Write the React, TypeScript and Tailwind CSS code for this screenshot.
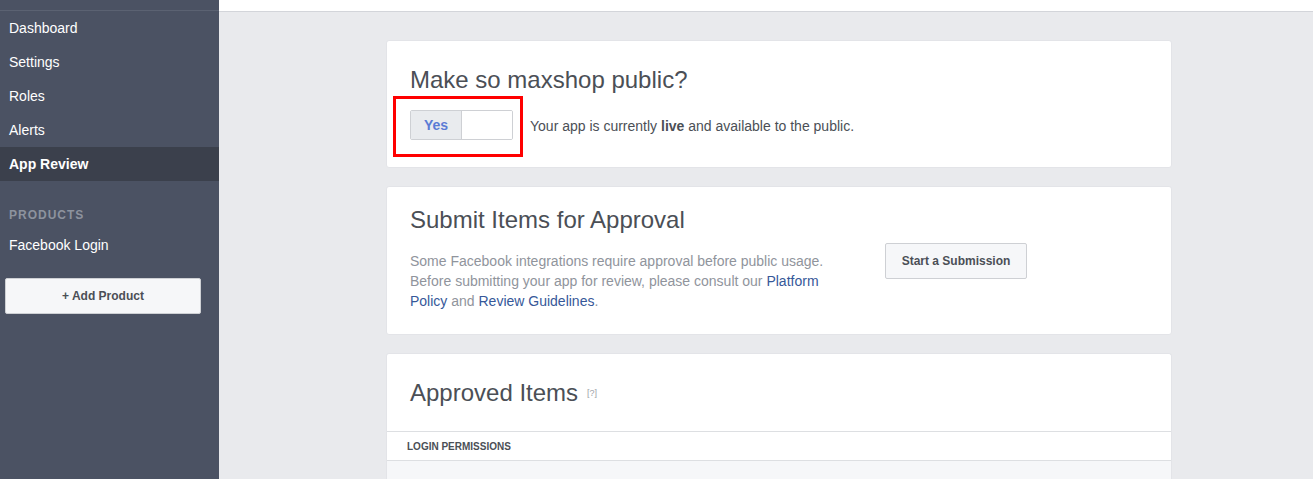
import React from "react";

const navItems = ["Dashboard", "Settings", "Roles", "Alerts", "App Review"];

const Sidebar = () => {
  return (
    <aside className="w-[219px] shrink-0 bg-[#4b5263] text-white">
      <div className="h-[11px] border-b border-[#5b6272]" />
      <nav className="flex flex-col">
        {navItems.map((item) => (
          <div
            key={item}
            className={
              item === "App Review"
                ? "h-[34px] flex items-center px-[9px] text-[14px] font-bold bg-[#3b404c]"
                : "h-[34px] flex items-center px-[9px] text-[14px]"
            }
          >
            {item}
          </div>
        ))}
      </nav>
      <div className="mt-[25px] h-[18px] flex items-center px-[9px] text-[12px] font-bold tracking-[1px] text-[#8d939e]">
        PRODUCTS
      </div>
      <div className="mt-[6px] h-[30px] flex items-center px-[9px] text-[14px]">
        Facebook Login
      </div>
      <div className="px-[5px] pt-[18px] pr-[18px]">
        <button className="w-full h-[36px] rounded-[2px] border border-[#ced0d4] bg-[#f6f7f9] text-[12px] font-bold text-[#4b4f56]">
          + Add Product
        </button>
      </div>
    </aside>
  );
};

const PublicCard = () => {
  return (
    <section className="rounded-[3px] border border-[#e3e4e8] bg-white px-[23px] pt-[25px] pb-[27px]">
      <h2 className="text-[24px] leading-[28px] text-[#4b4f56]">Make so maxshop public?</h2>
      <div className="mt-[16px] flex items-center">
        <div className="relative">
          {/* red annotation box */}
          <div className="absolute left-[-17px] top-[-14px] w-[130px] h-[61px] border-[3px] border-[#ff0000]" />
          <div className="flex h-[30px] w-[103px] rounded-[2px] border border-[#ced0d4] overflow-hidden">
            <div className="w-[51px] flex items-center justify-center bg-[#e9ebee] border-r border-[#ced0d4] text-[14px] font-bold text-[#5b7bd5]">
              Yes
            </div>
            <div className="flex-1 bg-white" />
          </div>
        </div>
        <p className="ml-[17px] mt-[3px] text-[14px] text-[#4b4f56]">
          Your app is currently <span className="font-bold">live</span> and available to the public.
        </p>
      </div>
    </section>
  );
};

const SubmitCard = () => {
  return (
    <section className="rounded-[3px] border border-[#e3e4e8] bg-white px-[23px] pt-[19px] pb-[23px]">
      <h2 className="text-[24px] leading-[28px] text-[#4b4f56]">Submit Items for Approval</h2>
      <div className="mt-[17px] flex items-start">
        <p className="w-[430px] text-[14px] leading-[20px] text-[#90949c]">
          Some Facebook integrations require approval before public usage. Before submitting your app for review, please consult our{" "}
          <span className="text-[#365899]">Platform</span>{" "}
          <span className="text-[#365899]">Policy</span> and{" "}
          <span className="text-[#365899]">Review Guidelines</span>.
        </p>
        <button className="ml-[45px] mt-[-8px] h-[36px] w-[142px] rounded-[2px] border border-[#ced0d4] bg-[#f6f7f9] text-[12px] font-bold text-[#4b4f56]">
          Start a Submission
        </button>
      </div>
    </section>
  );
};

const ApprovedCard = () => {
  return (
    <section className="rounded-t-[3px] border border-b-0 border-[#e3e4e8] bg-white">
      <div className="h-[77px] flex items-center px-[23px]">
        <h2 className="text-[24px] leading-[28px] text-[#4b4f56]">Approved Items</h2>
        <span className="ml-[9px] mt-[3px] text-[9px] text-[#a0a3a9]">[?]</span>
      </div>
      <div className="h-[30px] flex items-center border-y border-[#dddfe2] px-[20px] text-[10px] font-bold text-[#4b4f56]">
        LOGIN PERMISSIONS
      </div>
      <div className="h-[40px] bg-[#f6f7f9]" />
    </section>
  );
};

export default function App() {
  return (
    <div className="flex h-[479px] w-full overflow-hidden bg-[#e9eaed] font-['Liberation_Sans',Arial,sans-serif]">
      <Sidebar />
      <main className="flex-1 min-w-0">
        <div className="h-[12px] bg-white border-b border-[#d3d5da]" />
        <div className="ml-[167px] w-[786px] pt-[28px] flex flex-col gap-[18px]">
          <PublicCard />
          <SubmitCard />
          <ApprovedCard />
        </div>
      </main>
    </div>
  );
}
